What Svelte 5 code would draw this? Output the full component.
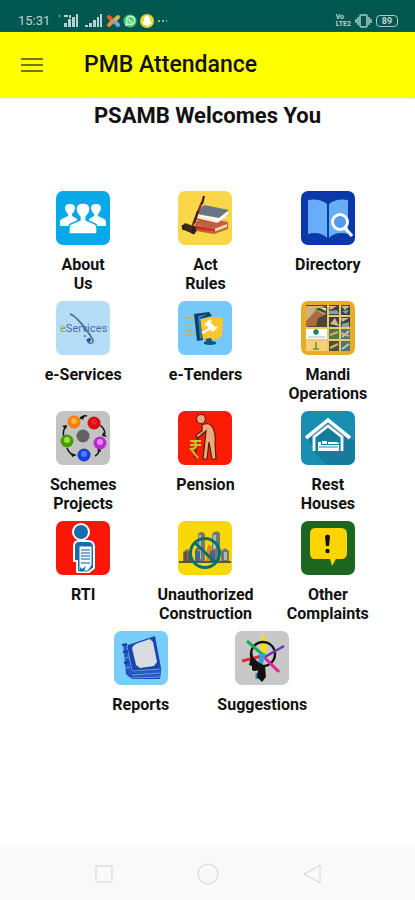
<script>
  const rows = [
    { id: 'about', label: 'About\nUs', bg: '#08a9e8' },
    { id: 'act', label: 'Act\nRules', bg: '#fad749' },
    { id: 'directory', label: 'Directory', bg: '#0833b4' },
    { id: 'services', label: 'e-Services', bg: '#b5ddf8' },
    { id: 'tenders', label: 'e-Tenders', bg: '#75c9f9' },
    { id: 'mandi', label: 'Mandi\nOperations', bg: '#e8ac25' },
    { id: 'schemes', label: 'Schemes\nProjects', bg: '#c3c3c3' },
    { id: 'pension', label: 'Pension', bg: '#fb1c06' },
    { id: 'rest', label: 'Rest\nHouses', bg: '#188fb2' },
    { id: 'rti', label: 'RTI', bg: '#fb1708' },
    { id: 'construction', label: 'Unauthorized\nConstruction', bg: '#f9d808' },
    { id: 'complaints', label: 'Other\nComplaints', bg: '#1c661f' }
  ];
  const extra = [
    { id: 'reports', label: 'Reports', bg: '#78cdfb' },
    { id: 'suggestions', label: 'Suggestions', bg: '#c8c8c8' }
  ];
</script>

{#snippet art(id)}
  {#if id === 'about'}
    <g fill="#fff">
      <path d="M4 35v-4q0-3 4-4l4-2v-2q-3-3-3-6 0-4 5-4t5 4q0 3-3 6v2l5 3v7zM50 35v-4q0-3-4-4l-4-2v-2q3-3 3-6 0-4-5-4t-5 4q0 3 3 6v2l-5 3v7z" />
      <path stroke="#08a9e8" stroke-width="1.4" d="M13 43v-6q0-4 4-5l7-3v-3q-4-4-4-8 0-6 7-6t7 6q0 4-4 8v3l7 3q4 1 4 5v6z" />
    </g>
  {:else if id === 'act'}
    <path fill="#bd603c" d="m17 31 11-4 22 4v7L36 43l-18-3z" />
    <path fill="#f3d6b0" d="m19 34 17 4 13-5v3l-13 5-17-4z" />
    <path fill="#d52d20" d="m17 34 20 4v3l-18-3z" />
    <path fill="#b8532f" d="m17 26 5-3 25 5-9 4-21-3z" />
    <path fill="#f4e6d1" d="m19 25 20 4 9-6v4l-9 5-21-5z" />
    <path fill="#657487" d="m18 22 8-8 25 5-10 8z" />
    <path fill="#fff" d="m18 23 23 4 9-7v3l-9 7-23-5z" />
    <path fill="none" stroke="#8f2722" stroke-width="2.2" d="M24 11 14 36" />
    <path fill="none" stroke="#38231e" stroke-width="2.2" d="m26 5-2 8M20 20l-4 12" />
    <path stroke="#3c2924" stroke-width="7" stroke-linecap="round" d="m8 36 7 3" />
    <path stroke="#2b2020" stroke-width="3" d="m5 34 1 5m10-4-1 8" />
  {:else if id === 'directory'}
    <rect x="2" y="2" width="50" height="50" rx="5" fill="#0b3aa8" />
    <path fill="#67adf8" d="M7 9q12-2 19 4v34Q19 40 7 43zM28 13q7-6 19-4v34q-12-3-19 4z" />
    <circle cx="39" cy="31" r="7.5" fill="#529af0" stroke="#fff" stroke-width="3" />
    <path stroke="#fff" stroke-width="3.4" d="m44 37 7 8" />
  {:else if id === 'services'}
    <text x="4" y="31" font-size="11" fill="#4a68ae"><tspan fill="#83a54d">e</tspan>Services</text>
    <path fill="none" stroke="#40688e" stroke-width="1.3" d="M14 13c4 1 11 9 16 16s9 12 6 13-5-1-5-4" />
    <path fill="none" stroke="#667d9b" d="M15 14c9 4 17 14 23 26" />
    <circle cx="33" cy="39" r="2" fill="#244d9b" /><circle cx="29" cy="35" r="1" fill="#3c687e" />
  {:else if id === 'tenders'}
    <path fill="#ffc72c" d="M23 18q9-2 19-2l3 2-1 17-4 3-15 1-3-5z" />
    <path fill="#123f68" d="m16 13 15-2 3 4-12 3 3 21-6 1z" />
    <path fill="#2e87b1" d="m20 15 10-2-8 4 2 20-2 1z" />
    <path stroke="#fff" stroke-width="2.5" d="m24 32 11-6" />
    <path stroke="#fff" stroke-width="5" d="m29 21 7 8" />
    <path stroke="#fff" stroke-width="2" d="m27 24 6-5m1 11 5-4" />
    <path fill="#09577d" d="m27 38 6-1 1 3 4 1v2q-6 2-12 0v-2l3-1z" />
    <path stroke="#b9b765" stroke-width="2" stroke-dasharray="3 1" d="M7 17h8M9 23h6M7 29h8M7 34h11" />
  {:else if id === 'mandi'}
    <rect x="5" y="4" width="44" height="46" fill="#e8c96b" />
    <path fill="#4e4634" d="M5 4h21v22H5z" /><path fill="#ceb187" d="M5 5h20L14 8l12 5-9 1-2 7-10 5z" /><path fill="#a96c42" d="M9 16 15 9l9 5-7 3-2 8H5v-5z" /><path fill="#e9dfc6" d="m17 6 8 1v3z" />
    <path fill="#fff" d="M5 28h21v10H5z" /><circle cx="15" cy="31" r="2.7" fill="#148353" /><path stroke="#aaba9a" d="M7 36h17" />
    <path fill="#f8d07a" d="M5 40h21v10H5z" /><path stroke="#5e9145" stroke-width="1.5" d="M15 41v7m-3 0h6" />
    <path fill="#344351" d="M28 4h10v10H28zm12 0h9v10h-9zM28 16h10v10H28zm12 0h9v10h-9z" />
    <path fill="#d6b588" d="M28 5h8l-7 4zm12 0h9l-5 4zM29 23l5-6 4 8zm11-6h8l-7 4z" />
    <path fill="#8fa0a3" d="m28 10 8-1 2 4H28zm13 0 7-1-3 4zm0 13 7-2v5h-7z" />
    <path fill="#527940" d="M28 28h10v10H28z" /><path fill="#52746b" d="M40 28h9v10h-9zM40 40h9v10h-9z" /><path fill="#4f5030" d="M28 40h10v10H28z" />
    <path stroke="#b4cddc" stroke-width="2" d="m41 36 7-6m-7 18 7-5" /><path stroke="#d2b179" stroke-width="2" d="m29 34 8-3m-8 16 8-4m3-11 8 3" />
  {:else if id === 'schemes'}
    <path fill="none" stroke="#151515" stroke-width="1.5" d="M24 8q3-4 7-3M44 14q5 4 5 9M8 26q-2-6 2-11M11 37q2 5 6 7M39 45q4-2 4-7" />
    <path d="m24 6 5-2-2 5zM47 21l4 5-5-1zM6 15l5-1-1 4zM15 42l6 2-5 2zM41 39l3-3 1 5z" />
    <circle cx="27" cy="25" r="6.5" fill="#626262" />
    <circle cx="18" cy="11" r="6.5" fill="#f97f09" /><circle cx="18" cy="10" r="3" fill="#ffb23c" />
    <circle cx="38" cy="12" r="6.5" fill="#dc0710" /><circle cx="38" cy="11" r="3" fill="#ed2229" />
    <circle cx="11" cy="30" r="6.5" fill="#459b05" /><circle cx="11" cy="29" r="3" fill="#9fdf42" />
    <circle cx="44" cy="32" r="6.5" fill="#b42acb" /><circle cx="44" cy="31" r="3" fill="#ef80ff" />
    <circle cx="28" cy="44" r="6.5" fill="#163fde" /><circle cx="28" cy="43" r="3" fill="#4e80ff" />
  {:else if id === 'pension'}
    <g fill="#edaa7b" stroke="#5c190d" stroke-width="1.2">
      <circle cx="23" cy="8" r="4.5" />
      <path d="M24 14q7-4 11 3 3 6 2 15l1 16h-4l-3-17-2 17h-4l2-18 1-10-6 5-3 2-1-3 6-4z" />
    </g>
    <path fill="none" stroke="#531e10" stroke-width="1.5" d="m20 26-3 21" />
    <path fill="none" stroke="#c7c52c" stroke-width="2" d="M12 30h11m-11 4h11m-9-4c6 0 6 8-1 8l7 9" />
  {:else if id === 'rest'}
    <path fill="#167c9b" d="m6 28 8 10v4l12 12h21q7 0 7-8V31L28 8z" />
    <path fill="none" stroke="#fff" stroke-width="3.6" d="M5 27 27 9l22 18" />
    <path fill="none" stroke="#fff" stroke-width="2.8" d="M13 40V26l14-11 14 11v14" />
    <path fill="#fff" d="M17 31h3v3h18v6H17zm4-1h5v3h-5zm6 1h8q3 0 3 2H27z" />
    <path stroke="#198ead" d="M18 36h19" />
  {:else if id === 'rti'}
    <path stroke="#fff" stroke-width="2" fill="#176dac" d="M25 3a8 8 0 1 1 0 16 8 8 0 0 1 0-16zM23 20h9q6 0 6 6v21l-5 4H21V40h-3V25q0-5 5-5z" />
    <path fill="#fff" stroke="#176dac" d="M23 25h13v19l-4 6h-9z" />
    <path fill="none" stroke="#4f93c7" stroke-width="1.5" d="M25 29h9m-9 3h9m-9 3h9m-9 3h9m-9 4h9" /><path fill="#176dac" d="m24 46 2 2 4-3-2 5h-4z" />
  {:else if id === 'construction'}
    <path fill="#727875" d="M20 13q3-4 7 0v28h-7zm14 0q4-5 8-1v29h-8zM5 31l4-3 5 3v10H5zm12-3 4-3 5 3v13h-9zm26 2 4-3 4 3v11h-8z" />
    <path fill="#b1b8bb" d="M21 14h2v13h-2zm14 0h3v14h-3zm11 17h3v8h-3zM20 29h3v9h-3z" />
    <path fill="#744c34" d="M6 31h3v9H6zm4 0h3v9h-3z" /><path fill="#555b24" d="M1 40h52v2H1z" />
    <path fill="#d98b23" d="m29 28 2-5 3 3v14h-6z" /><path fill="#48658b" d="M17 30h5v10h-5zm15 0h5v10h-5z" />
    <circle cx="27" cy="32" r="14.5" fill="none" stroke="#07706b" stroke-width="3" /><path stroke="#07706b" stroke-width="3" d="m16 21 22 21" />
  {:else if id === 'complaints'}
    <path fill="#fed502" d="M14 7h26q6 0 6 6v19q0 6-6 6h-5l-4 7-2-7H14q-5 0-5-6V13q0-6 5-6z" />
    <path d="M24 15q3-3 5 0l-1 10h-3z" /><circle cx="26.5" cy="30" r="2.2" />
  {:else if id === 'reports'}
    <path fill="#1746ae" d="m14 14 27-9 6 32-1 11H18l-6-5-2-22z" />
    <path fill="#2458c5" d="m9 14 4-1 4 28 30-3-1 9H19l-6-5z" />
    <path fill="#d8dcde" d="m20 14 4-2 12-4 3 3 4 20-3 4-14 2-4-3-4-17z" />
    <path fill="none" stroke="#7299db" d="m13 15 5 25 28-2M18 44l28-2M17 47l29-1M8 22l6-2M9 28l6-2M11 37l5-1" />
    <path fill="none" stroke="#163e9d" stroke-width="2" d="m8 14 5-1m-4 8 5-1m-4 12 5-1" />
  {:else}
    <path stroke="#f5de15" stroke-width="6" d="m28 8 1 14" /><path fill="#e7df42" d="m28 2-3 8h7z" />
    <circle cx="28" cy="23" r="12" fill="none" stroke="#111" stroke-width="2.4" />
    <path stroke="#18a75b" stroke-width="3" d="m12 10 16 14" /><path stroke="#6b36a6" stroke-width="2.5" d="M49 15 28 27" />
    <path stroke="#e52932" stroke-width="3" d="m7 30 20-5" /><path stroke="#e42496" stroke-width="3" d="m28 25 16 16" />
    <path stroke="#25a5d9" stroke-width="5" d="m28 22-3 12" /><path stroke="#2489bd" stroke-width="3" d="M22 42v6" />
    <path d="M17 20q-1 6-3 14l3 1v4q3 2 6 0l-1 7 5 5 4-5-1-11-7-4-5-5z" />
  {/if}
{/snippet}

{#snippet tile(item)}
  <a class="tile" href="#{item.id}">
    <svg class="icon" viewBox="0 0 54 54" style:background={item.bg} fill="none" aria-hidden="true">
      <g fill="#111">{@render art(item.id)}</g>
    </svg>
    <span class="label">{item.label}</span>
  </a>
{/snippet}

<div class="screen">
  <div class="status">
    <span class="time">15:31</span>
    <svg width="108" height="16" viewBox="0 0 108 16" aria-hidden="true">
      <g fill="#b7d3cf">
        <path d="M0 2h1v2H0zm5 0h4v2H5zm5 0h2v3h-2zM5 10h3v4H5zm4-4h3v8H9zm4-2h3v10h-3zm4-3h2v13h-2zM26 12h3v2h-3zm4-2h3v4h-3zm4-3h3v7h-3zm4-3h2v10h-2zm3-3h2v13h-2z" />
      </g>
      <g stroke-width="4" stroke-linecap="round"><path stroke="#e75837" d="m50 4 3 3" /><path stroke="#dfb345" d="m59 4-3 3" /><path stroke="#e88d35" d="m50 12 3-3" /><path stroke="#74a9d5" d="m59 12-3-3" /></g>
      <circle cx="71" cy="8" r="6.5" fill="#42d273" /><path fill="none" stroke="#d9f7e0" stroke-width="1.3" d="m67 12 1-3a4 4 0 1 1 2 2zM70 6q0 3 3 3" />
      <circle cx="88" cy="8" r="7" fill="#e8d532" /><path fill="#fff" d="M85 8V6q0-3 3-3t3 3v2l2 2-3 2-2 1-2-1-3-2z" />
      <path fill="#8eb7b2" d="M99 7h2v2h-2zm4 0h2v2h-2zm4 0h1v2h-1z" />
    </svg>
    <span class="volte">Vo<br />LTE2</span>
    <svg width="18" height="14" viewBox="0 0 18 14" fill="none" stroke="#a9cbc7" stroke-width="1.5" aria-hidden="true"><rect x="5" y="1" width="7" height="12" rx="1" /><path d="M3 3v8M1 5v4M14 3v8m2-6v4" /></svg>
    <span class="battery">89</span>
  </div>

  <header>
    <button class="menu" aria-label="Open menu">
      <svg width="22" height="16" viewBox="0 0 22 16" fill="none" stroke="#77770a" stroke-width="2" aria-hidden="true"><path d="M0 2h22M0 8h22M0 14h22" /></svg>
    </button>
    <h1>PMB Attendance</h1>
  </header>

  <main>
    <h2>PSAMB Welcomes You</h2>
    <div class="grid">
      {#each rows as item (item.id)}{@render tile(item)}{/each}
    </div>
    <div class="last">
      {#each extra as item (item.id)}{@render tile(item)}{/each}
    </div>
  </main>

  <nav>
    <button aria-label="Recent apps"><svg width="22" height="22" viewBox="0 0 22 22"><rect x="3" y="3" width="16" height="16" rx="1" /></svg></button>
    <button aria-label="Home"><svg width="22" height="22" viewBox="0 0 22 22"><circle cx="11" cy="11" r="10" /></svg></button>
    <button aria-label="Back"><svg width="22" height="22" viewBox="0 0 22 22"><path d="M19 2v18L3 11z" stroke-linejoin="round" /></svg></button>
  </nav>
</div>

<style>
  :global(body) { margin: 0; }
  .screen {
    display: flex;
    flex-direction: column;
    min-height: 100vh;
    background: #fff;
    color: #111;
    font-family: Roboto, "Liberation Sans", sans-serif;
  }
  .status {
    display: flex;
    align-items: center;
    box-sizing: border-box;
    height: 32px;
    padding: 10px 17px 0 18px;
    background: #00574f;
    color: #bad5d1;
  }
  .time { width: 41px; font-size: 13px; line-height: 20px; }
  .volte { margin: 0 4px 0 auto; font-size: 7px; line-height: 7px; font-weight: 700; }
  .battery {
    box-sizing: border-box;
    width: 22px;
    margin-left: 3px;
    border: 1px solid #a9cbc7;
    border-radius: 4px;
    font-size: 9px;
    line-height: 10px;
    font-weight: 700;
    text-align: center;
  }
  header {
    display: flex;
    align-items: center;
    height: 65px;
    padding: 0 12px;
    background: #ff0;
    box-shadow: 0 1px 2px #ccc;
  }
  button { padding: 0; border: 0; background: none; }
  svg { display: block; }
  .menu { display: grid; place-items: center; width: 40px; height: 40px; }
  h1 { margin: 0 0 0 32px; font-size: 23px; line-height: 32px; font-weight: 500; }
  main { flex: 1; padding-bottom: 16px; }
  h2 { margin: 5px 0 0; font-size: 22px; line-height: 28px; font-weight: 700; text-align: center; }
  .grid {
    display: grid;
    grid-template-columns: repeat(3, 1fr);
    padding: 61px 26px 0 22px;
  }
  .last { display: grid; grid-template-columns: repeat(2, 1fr); padding: 0 92px 0 80px; }
  .tile {
    display: flex;
    flex-direction: column;
    align-items: center;
    gap: 10px;
    min-height: 110px;
    color: inherit;
    text-decoration: none;
  }
  .icon { width: 54px; height: 54px; border-radius: 7px; }
  .label { font-size: 16px; line-height: 19px; font-weight: 700; text-align: center; white-space: pre-line; }
  nav {
    display: flex;
    justify-content: center;
    align-items: center;
    gap: 82px;
    height: 53px;
    background: #f9f9f9;
  }
  nav svg { fill: none; stroke: #d2d2d2; stroke-width: 1; }
</style>
